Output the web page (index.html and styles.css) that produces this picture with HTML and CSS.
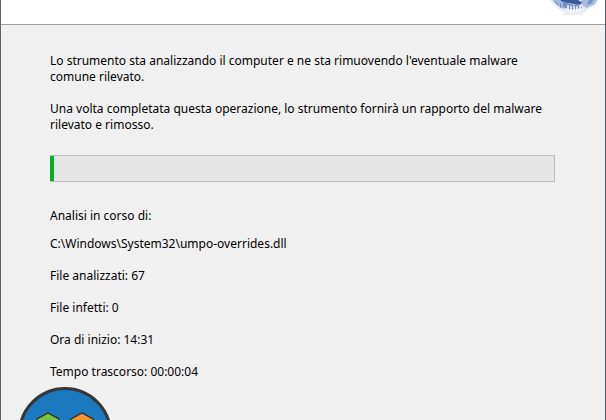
FILE: index.html
```html
<!DOCTYPE html>
<html lang="it">
<head>
    <meta charset="UTF-8">
    <meta name="viewport" content="width=device-width, initial-scale=1.0">
    <title>Strumento di rimozione malware</title>
    <link rel="stylesheet" href="styles.css">
</head>
<body>
    <div class="window">
        <header class="banner">
            <svg class="banner-icon" width="60" height="20" viewBox="0 0 60 20" aria-hidden="true">
                <path d="M6 0 L15 9 L24 13 L40 13 L53 4 L56 0 Z" fill="#e6ecf6"/>
                <path d="M9 0 L15 6 L21 9 L26 3 L24 0 Z" fill="#a9bbdc"/>
                <path d="M17 0 L35 0 L40 3 L35 5 L20 2 Z" fill="#3a5a9e"/>
                <path d="M20 2 L31 5 L37 4 L39 8 L28 10 L20 7 Z" fill="#7590c6"/>
                <path d="M38 0 L54 0 L52 4 L44 8 L40 6 Z" fill="#a9bbdc"/>
                <path d="M46 0 L50 0 L49 3 L44 5 Z" fill="#7590c6"/>
                <path d="M12 1 L15 5 M17 3 L18 8" fill="none" stroke="#6685c0"/>
                <path d="M25 5 v7 M28 6 v7 M31 6 v6 M34 6 v6 M37 5 v6" stroke="#fff" stroke-width="1.4"/>
                <path d="M20 14 h20" stroke="#d5dff0"/>
            </svg>
        </header>

        <main class="content">
            <p class="message">Lo strumento sta analizzando il computer e ne sta rimuovendo l'eventuale malware comune rilevato.</p>
            <p class="message">Una volta completata questa operazione, lo strumento fornirà un rapporto del malware rilevato e rimosso.</p>

            <progress class="scan-progress" value="4" max="505" aria-label="Avanzamento analisi"></progress>

            <p class="scan-label">Analisi in corso di:</p>
            <ul class="stats">
                <li>C:\Windows\System32\umpo-overrides.dll</li>
                <li>File analizzati: 67</li>
                <li>File infetti: 0</li>
                <li>Ora di inizio: 14:31</li>
                <li>Tempo trascorso: 00:00:04</li>
            </ul>
        </main>

        <!-- round badge over the bottom left corner -->
        <svg class="badge" width="94" height="34" viewBox="0 0 94 34" aria-hidden="true">
            <circle cx="47" cy="48" r="45.5" fill="#1b79c0" stroke="#383634" stroke-width="3"/>
            <path d="M19 36 L19 33 L30 27 L41 33 L41 36 Z" fill="#7cc242" stroke="#2b3328" stroke-width="1.4"/>
            <path d="M53 36 L53 33 L64 27 L75 33 L75 36 Z" fill="#f7932f" stroke="#2b3328" stroke-width="1.4"/>
        </svg>
    </div>
</body>
</html>
```
FILE: styles.css
```css
* {
    margin: 0;
    padding: 0;
    box-sizing: border-box;
}

body {
    background: #f0f0f0;
    color: #000;
    font-family: 'Noto Sans', Tahoma, sans-serif;
    font-size: 12px;
    line-height: 16px;
    overflow: hidden;
}

.window {
    position: relative;
    min-height: 100vh;
    border: solid #56656f;
    border-width: 0 1px;
}

/* White strip at the top */
.banner {
    display: flex;
    justify-content: flex-end;
    align-items: flex-start;
    height: 25px;
    padding-right: 2px;
    background: #fff;
    border-bottom: 1px solid #a0a0a0;
}

.content {
    padding: 28px 50px 0 49px;
}

.message {
    margin-bottom: 16px;
    padding-right: 7px;
}

/* Progress bar */
.scan-progress {
    display: block;
    appearance: none;
    width: 100%;
    height: 27px;
    margin: 22px 0 26px;
    background: #e6e6e6;
    border: 1px solid #bcbcbc;
    border-left: 0;
}

.scan-progress::-webkit-progress-bar {
    background: #e6e6e6;
}

.scan-progress::-webkit-progress-value {
    background: #06b025;
}

.scan-label {
    margin-bottom: 12px;
}

.stats {
    display: grid;
    gap: 16px;
    list-style: none;
}

/* Badge */
.badge {
    position: absolute;
    left: 17px;
    bottom: 0;
}
```
